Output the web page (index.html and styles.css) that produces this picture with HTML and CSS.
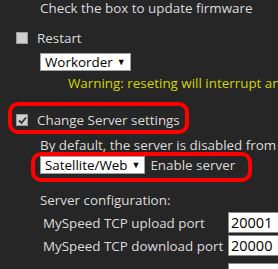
FILE: index.html
```html
<!DOCTYPE html>
<html lang="en">
<head>
    <meta charset="UTF-8">
    <meta name="viewport" content="width=device-width, initial-scale=1.0">
    <title>Settings</title>
    <link rel="stylesheet" href="styles.css">
</head>
<body>
    <div class="panel">
        <div class="note">Check the box to update firmware</div>

        <div class="check-row restart">
            <span class="box"></span>
            <span>Restart</span>
        </div>
        <div class="select-row">
            <span class="select">Workorder <span class="arrow">&#9660;</span></span>
        </div>
        <div class="warning">Warning: reseting will interrupt any running test</div>

        <div class="check-row server">
            <span class="box checked">
                <svg width="9" height="9" viewBox="0 0 9 9">
                    <path d="M1 4.5 L3.5 7 L8 1.5" stroke="#333" stroke-width="1.8" fill="none"/>
                </svg>
            </span>
            <span>Change Server settings</span>
        </div>
        <div class="note by-default">By default, the server is disabled from starting</div>
        <div class="select-row enable">
            <span class="select">Satellite/Web <span class="arrow">&#9660;</span></span>
            <span>Enable server</span>
        </div>

        <div class="note config">Server configuration:</div>
        <div class="ports">
            <div class="port-row">
                <span class="port-label">MySpeed TCP upload port</span>
                <span class="port-input">20001</span>
            </div>
            <div class="port-row">
                <span class="port-label">MySpeed TCP download port</span>
                <span class="port-input">20000</span>
            </div>
            <div class="port-row">
                <span class="port-label">MyVoIP control port</span>
                <span class="port-input">20000</span>
            </div>
        </div>

        <div class="mark mark-server"></div>
        <div class="mark mark-enable"></div>
    </div>
</body>
</html>
```

FILE: styles.css
```css
html, body {
    margin: 0;
    padding: 0;
    background-color: #262626;
    overflow: hidden;
}
.panel {
    position: relative;
    width: 278px;
    height: 269px;
    overflow: hidden;
    color: #dcdcdc;
    font-family: 'Open Sans', 'Noto Sans', sans-serif;
    font-size: 13.4px;
    line-height: 16px;
    white-space: nowrap;
}
.note {
    padding-left: 40px;
    height: 16px;
}
.check-row {
    display: flex;
    align-items: center;
    gap: 9px;
    padding-left: 16px;
    height: 18px;
}
.restart {
    margin-top: 13px;
}
.box {
    width: 10px;
    height: 10px;
    background-color: #cfcfcf;
    border: 1px solid #9a9a9a;
    display: flex;
    align-items: center;
    justify-content: center;
}
.select-row {
    display: flex;
    align-items: center;
    gap: 5px;
    padding-left: 40px;
    margin-top: 6px;
}
.select {
    display: inline-flex;
    align-items: center;
    height: 16px;
    padding: 0 4px;
    background-color: #fff;
    border: 1px solid #a0a0a0;
    color: #000;
}
.arrow {
    font-size: 9px;
    margin-left: 4px;
}
.warning {
    color: #d4d400;
    padding-left: 68px;
    margin-top: 4px;
    height: 16px;
}
.server {
    margin-top: 20px;
}
.by-default {
    margin-top: 8px;
}
.enable {
    margin-top: 3px;
}
.config {
    margin-top: 18px;
}
.ports {
    display: flex;
    flex-direction: column;
    gap: 2px;
    margin-top: 4px;
}
.port-row {
    display: flex;
    align-items: center;
    padding-left: 43px;
    height: 21px;
}
.port-row:last-child {
    margin-top: 5px;
}
.port-label {
    width: 185px;
    flex-shrink: 0;
}
.port-input {
    flex-shrink: 0;
    width: 60px;
    height: 19px;
    line-height: 19px;
    padding-left: 2px;
    background-color: #fff;
    border: 1px solid #8a8a8a;
    color: #000;
    font-size: 14.5px;
}
.mark {
    position: absolute;
    border: 4px solid #ff0000;
    border-radius: 10px;
    box-sizing: border-box;
}
.mark-server {
    left: 8px;
    top: 102px;
    width: 181px;
    height: 32px;
}
.mark-enable {
    left: 31px;
    top: 152px;
    width: 221px;
    height: 30px;
}
```
